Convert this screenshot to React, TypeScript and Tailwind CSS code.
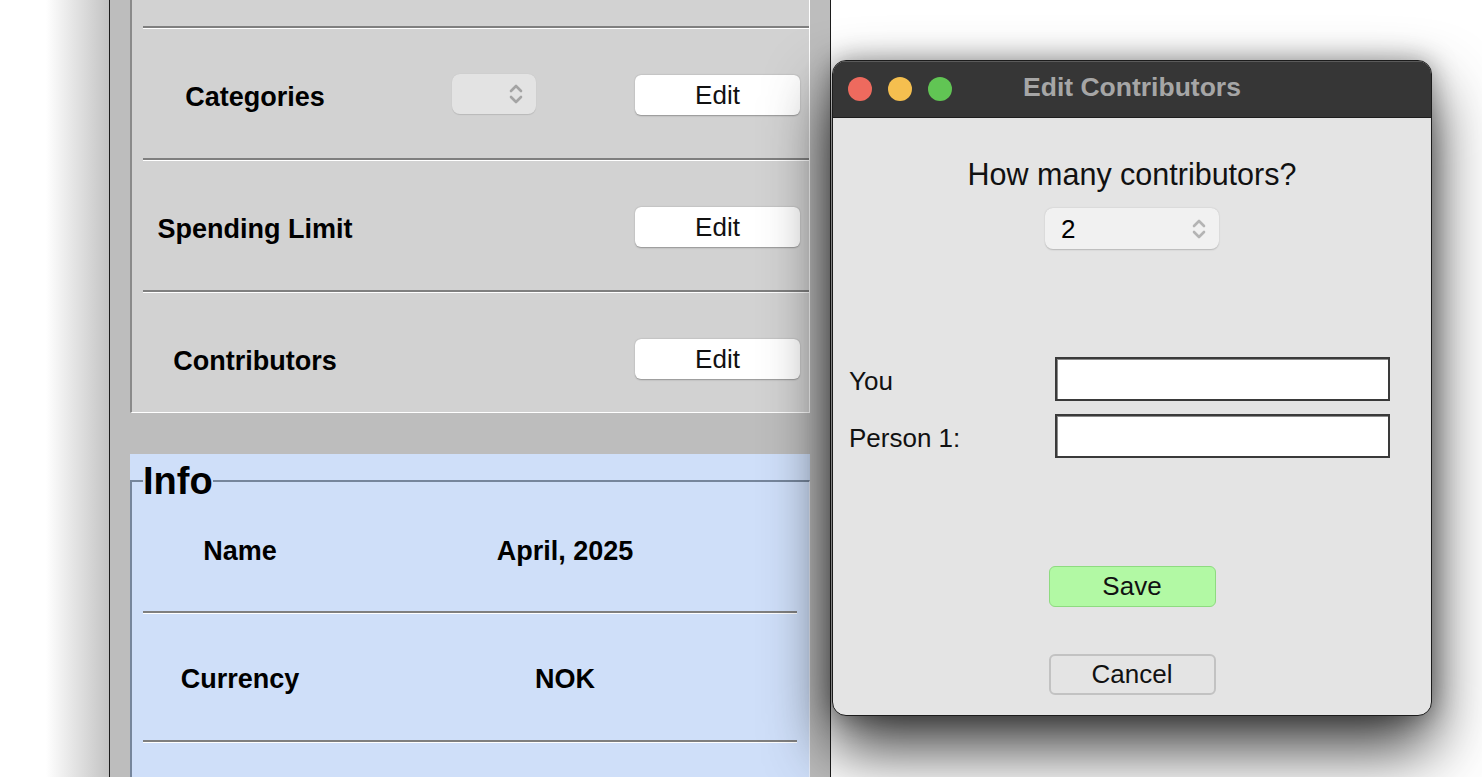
import React from "react";

function Chevrons({ color = "#a9a9a9" }: { color?: string }) {
  return (
    <svg width="16" height="26" viewBox="0 0 16 26" fill="none">
      <path d="M3 10 L8 5 L13 10" stroke={color} strokeWidth="2.6" strokeLinecap="round" strokeLinejoin="round" />
      <path d="M3 16 L8 21 L13 16" stroke={color} strokeWidth="2.6" strokeLinecap="round" strokeLinejoin="round" />
    </svg>
  );
}

function Groove({ className = "" }: { className?: string }) {
  return <div className={"shrink-0 h-[3px] border-t-2 border-[#7f7f7f] border-b border-b-white " + className} />;
}

function EditButton() {
  return (
    <div className="w-[165px] h-[40px] rounded-[6px] bg-white shadow-[0_0.5px_1.5px_rgba(0,0,0,0.3)] flex items-center justify-center text-[26px] text-[#111]">
      Edit
    </div>
  );
}

interface SettingRowProps {
  label: string;
  withCombo?: boolean;
  height: number;
}

function SettingRow({ label, withCombo, height }: SettingRowProps) {
  return (
    <div className="flex items-start pt-[46px]" style={{ height }}>
      <div className="w-[224px] h-[40px] flex items-center justify-center pt-[4px] text-[27px] font-bold text-black">
        {label}
      </div>
      <div className="w-[268px] h-[40px] flex items-center">
        {withCombo && (
          <div className="ml-[85px] -mt-[3px] w-[84px] h-[40px] rounded-[8px] bg-[#e3e3e3] shadow-[0_0.5px_1px_rgba(0,0,0,0.12)] flex items-center justify-end pr-[12px]">
            <Chevrons color="#a4a4a4" />
          </div>
        )}
      </div>
      <EditButton />
    </div>
  );
}

function InfoRow({ label, value, className }: { label: string; value: string; className: string }) {
  return (
    <div className={"flex items-center text-[27px] font-bold text-black " + className}>
      <div className="w-[194px] text-center">{label}</div>
      <div className="w-[456px] text-center">{value}</div>
    </div>
  );
}

function ContributorsDialog() {
  return (
    <div className="absolute left-[832px] top-[60px] w-[600px] h-[656px] rounded-[14px] border border-[#1c1c1c] bg-[#e4e4e4] overflow-hidden shadow-[0_32px_64px_rgba(0,0,0,0.78),0_0_26px_rgba(0,0,0,0.35)]">
      {/* Title bar */}
      <div className="h-[57px] bg-[#363636] border-b border-[#1d1d1d] grid grid-cols-[1fr_auto_1fr] items-center shadow-[inset_0_1px_0_#5a5a5a]">
        <div className="flex items-center gap-[16px] pl-[15px]">
          <span className="w-[24px] h-[24px] rounded-full bg-[#ee6a5e]" />
          <span className="w-[24px] h-[24px] rounded-full bg-[#f5bf4f]" />
          <span className="w-[24px] h-[24px] rounded-full bg-[#61c554]" />
        </div>
        <div className="text-[26.5px] font-bold text-[#a6a6a6] -mt-[3px]">Edit Contributors</div>
        <div />
      </div>

      {/* Body */}
      <div className="flex flex-col items-center pt-[39px]">
        <div className="text-[30.5px] leading-[34px] text-[#111]">How many contributors?</div>
        <div className="mt-[17px] w-[174px] h-[41px] rounded-[8px] bg-[#f1f1f1] shadow-[0_0.5px_1.5px_rgba(0,0,0,0.2)] flex items-center justify-between pl-[16px] pr-[12px]">
          <span className="text-[26px] text-black pt-[2px]">2</span>
          <Chevrons color="#b4b4b4" />
        </div>

        <div className="self-stretch mt-[107px] pl-[16px] flex flex-col gap-[12px]">
          {["You", "Person 1:"].map((name) => (
            <div key={name} className="flex items-center">
              <div className="w-[206px] pt-[6px] text-[26px] text-[#111]">{name}</div>
              <div className="w-[335px] h-[44px] bg-white border-2 border-[#3a3a3a] shadow-[inset_1px_1px_0_#8c8c8c]" />
            </div>
          ))}
        </div>

        <div className="mt-[108px] w-[167px] h-[41px] rounded-[6px] bg-[#b2f9a4] border-[1.5px] border-[#8edb80] flex items-center justify-center text-[26px] text-[#111]">
          Save
        </div>
        <div className="mt-[47px] w-[167px] h-[41px] rounded-[6px] bg-[#e4e4e4] border-2 border-[#c2c2c2] flex items-center justify-center text-[26px] text-[#111]">
          Cancel
        </div>
      </div>
    </div>
  );
}

export default function App() {
  return (
    <div className="relative w-[1482px] h-[777px] overflow-hidden bg-white flex font-['Liberation_Sans',Arial,sans-serif]">
      {/* desktop shadow left of the main window */}
      <div className="shrink-0 w-[109px] h-full bg-[linear-gradient(to_right,#ffffff_42%,#c3c3c3)]" />

      {/* Main window */}
      <div className="shrink-0 w-[722px] h-full border-l border-r border-[#1c1c1c] bg-[#bdbdbd] px-[20px] flex flex-col overflow-hidden">
        {/* Settings panel */}
        <div className="shrink-0 h-[413px] bg-[#d2d2d2] border-l-2 border-[#8a8a8a] border-r border-r-white border-b border-b-white pl-[11px] flex flex-col">
          <div className="shrink-0 h-[26px]" />
          <Groove />
          <SettingRow label="Categories" withCombo height={129} />
          <Groove />
          <SettingRow label="Spending Limit" height={129} />
          <Groove />
          <SettingRow label="Contributors" height={119} />
        </div>

        <div className="shrink-0 h-[41px]" />

        {/* Info panel */}
        <div className="shrink-0 h-[323px] bg-[#cfdff9] pt-[8px] overflow-hidden">
          <fieldset className="h-[400px] border-t-2 border-l-2 border-[#76869c] border-r border-r-[#e8eefa]">
            <legend className="ml-[11px] p-0 text-[38px] leading-[38px] font-bold text-black">Info</legend>
            <div className="pl-[11px] w-[665px] flex flex-col">
              <InfoRow label="Name" value="April, 2025" className="h-[111px] pb-[8px]" />
              <Groove />
              <InfoRow label="Currency" value="NOK" className="h-[126px] pt-[4px]" />
              <Groove />
            </div>
          </fieldset>
        </div>
      </div>

      <ContributorsDialog />
    </div>
  );
}
